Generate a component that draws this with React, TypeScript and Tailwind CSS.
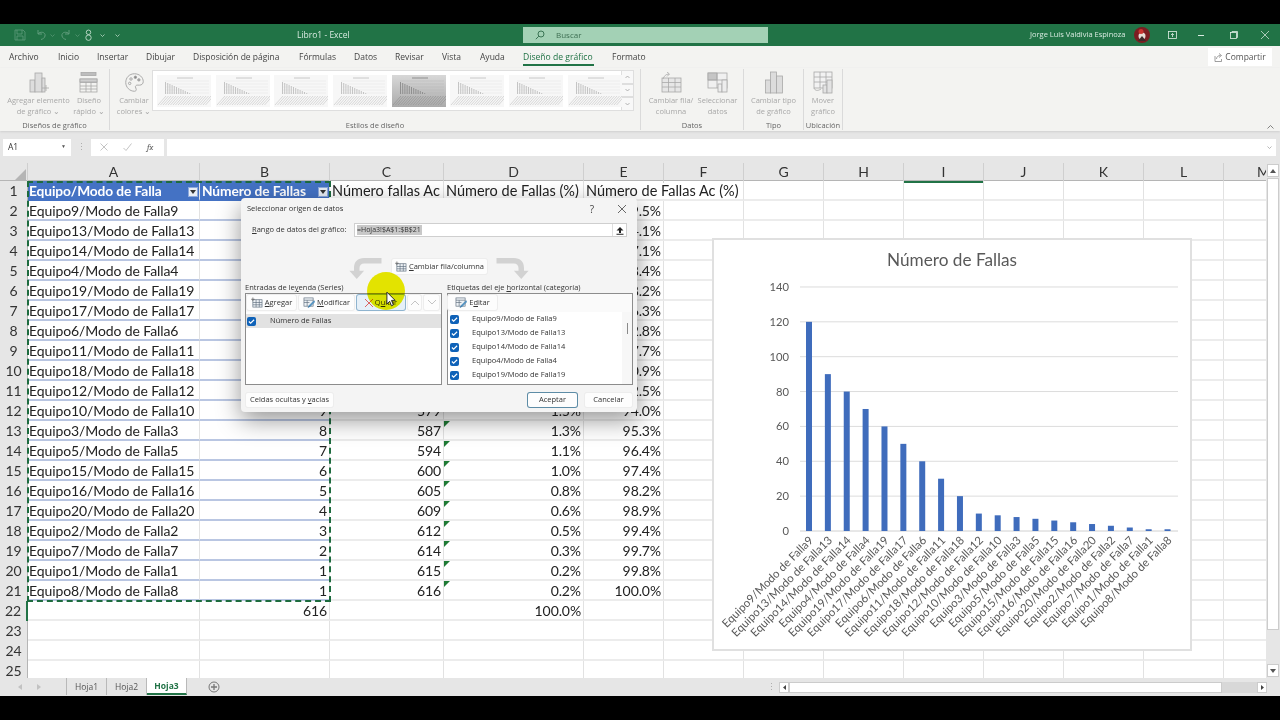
import React from "react";

const rows: [string, string, string, string, string][] = [
  ["Equipo9/Modo de Falla9", "120", "120", "19.5%", "19.5%"],
  ["Equipo13/Modo de Falla13", "90", "210", "14.6%", "34.1%"],
  ["Equipo14/Modo de Falla14", "80", "290", "13.0%", "47.1%"],
  ["Equipo4/Modo de Falla4", "70", "360", "11.4%", "58.4%"],
  ["Equipo19/Modo de Falla19", "60", "420", "9.7%", "68.2%"],
  ["Equipo17/Modo de Falla17", "50", "470", "8.1%", "76.3%"],
  ["Equipo6/Modo de Falla6", "40", "510", "6.5%", "82.8%"],
  ["Equipo11/Modo de Falla11", "30", "540", "4.9%", "87.7%"],
  ["Equipo18/Modo de Falla18", "20", "560", "3.2%", "90.9%"],
  ["Equipo12/Modo de Falla12", "10", "570", "1.6%", "92.5%"],
  ["Equipo10/Modo de Falla10", "9", "579", "1.5%", "94.0%"],
  ["Equipo3/Modo de Falla3", "8", "587", "1.3%", "95.3%"],
  ["Equipo5/Modo de Falla5", "7", "594", "1.1%", "96.4%"],
  ["Equipo15/Modo de Falla15", "6", "600", "1.0%", "97.4%"],
  ["Equipo16/Modo de Falla16", "5", "605", "0.8%", "98.2%"],
  ["Equipo20/Modo de Falla20", "4", "609", "0.6%", "98.9%"],
  ["Equipo2/Modo de Falla2", "3", "612", "0.5%", "99.4%"],
  ["Equipo7/Modo de Falla7", "2", "614", "0.3%", "99.7%"],
  ["Equipo1/Modo de Falla1", "1", "615", "0.2%", "99.8%"],
  ["Equipo8/Modo de Falla8", "1", "616", "0.2%", "100.0%"],
];
const values = [120, 90, 80, 70, 60, 50, 40, 30, 20, 10, 9, 8, 7, 6, 5, 4, 3, 2, 1, 1];

const colTemplate = "grid grid-cols-[28px_172px_130px_114px_140px_80px_80px_80px_80px_80px_80px_80px_80px_80px]";
const cols = ["A", "B", "C", "D", "E", "F", "G", "H", "I", "J", "K", "L", "M"];
const cell = "border-r border-b-2 border-r-[#e2e2e2] border-b-[#ececec] h-5 text-[14px] tracking-[-0.1px] leading-[19px] whitespace-nowrap text-[#222] px-0.5";

function Thumb({ dark }: { dark?: boolean }) {
  const line = dark ? "#b5b5b5" : "#e2e2e2";
  const bar = dark ? "#8f8f8f" : "#c4c4c4";
  const lab = dark ? "#9a9a9a" : "#d4d4d4";
  return (
    <div className={`w-[54px] h-[32px] flex-none ${dark ? "bg-gradient-to-b from-[#d8d8d8] to-[#ababab]" : "bg-[#f7f7f7]"}`}>
      <svg viewBox="0 0 54 32" className="w-[54px] h-[32px]">
        <line x1="20" y1="3" x2="36" y2="3" stroke={dark ? "#8f8f8f" : "#c8c8c8"} strokeWidth="1" />
        {[6, 9, 12, 15, 18].map((y) => <line key={y} x1="8" y1={y} x2="52" y2={y} stroke={line} strokeWidth="0.5" />)}
        {[0, 1, 2, 3, 4, 5, 6, 7, 8, 9, 10, 11].map((i) => <rect key={i} x={8 + i * 2.2} y={7 + i} width="1" height={12 - i} fill={bar} />)}
        {Array.from({ length: 20 }).map((_, i) => <line key={i} x1={1 + i * 2.500} y1="30" x2={9 + i * 2.500} y2="21" stroke={lab} strokeWidth="0.9" />)}
      </svg>
    </div>
  );
}

function RibbonBtn({ l1, l2, icon, w }: { l1: string; l2: string; icon: React.ReactNode; w: string }) {
  return (
    <div className={`flex flex-col items-center text-[#a8a8a8] leading-[11px] whitespace-nowrap shrink-0 ${w}`}>
      <div className="h-[21px] flex items-center justify-center">{icon}</div>
      <span className="mt-[2px]">{l1}</span>
      <span>{l2}</span>
    </div>
  );
}

const IconBars = () => (
  <svg width="22" height="21" viewBox="0 0 22 21" fill="#dddddd" stroke="#a8a8a8" strokeWidth="0.8"><rect x="2" y="8" width="5" height="12" /><rect x="7" y="1" width="7" height="19" /><rect x="14" y="6" width="3" height="14" /><path d="M14 16h7M18 13v6" fill="none" /></svg>
);
const IconQuick = () => (
  <svg width="20" height="21" viewBox="0 0 20 21" fill="none" stroke="#a8a8a8" strokeWidth="0.8"><rect x="2" y="0.500" width="15" height="3" fill="#bdbdbd" /><rect x="1" y="7" width="17" height="13" /><path d="M1 10.500h17M1 14h17M1 17h17M7 7v13M12 7v13" /><rect x="1" y="7" width="17" height="3" fill="#cfcfcf" /></svg>
);
const IconPalette = () => (
  <svg width="21" height="21" viewBox="0 0 24 24" fill="none" stroke="#a0a0a0" strokeWidth="1"><path d="M12 2C6 2 2 6.500 2 12s4.500 10 10 10c1.500 0 2-1 2-2 0-1.500-1-2-1-3s1-2 2-2h3c2 0 4-1.500 4-4C22 6 17.500 2 12 2z" /><circle cx="8" cy="8" r="1.400" /><circle cx="13" cy="6" r="1.400" fill="#888" /><circle cx="17" cy="9" r="1.400" fill="#aaa" /><circle cx="6.500" cy="13" r="1.400" /></svg>
);
const IconSwitch = () => (
  <svg width="22" height="21" viewBox="0 0 22 21" fill="none" stroke="#a8a8a8" strokeWidth="0.8"><rect x="2" y="6" width="19" height="14" fill="#e6e6e6" /><path d="M2 10.500h19M2 15h19M8.500 6v14M15 6v14" /><path d="M3 7c1-3 3-5 6-5M7 0l2.500 2L7 4.500" /></svg>
);
const IconSelect = () => (
  <svg width="22" height="21" viewBox="0 0 22 21" fill="none" stroke="#a8a8a8" strokeWidth="0.8"><rect x="1" y="1" width="19" height="15" fill="#f0f0f0" /><rect x="1" y="1" width="9" height="7" fill="#c5c5c5" /><path d="M1 8h19M10 1v15" /><rect x="11" y="12" width="4" height="8" fill="#ededed" /><rect x="15" y="8" width="5" height="12" fill="#ededed" /></svg>
);
const IconType = () => (
  <svg width="20" height="23" viewBox="0 0 20 23" fill="#dcdcdc" stroke="#a8a8a8" strokeWidth="0.8"><rect x="1.500" y="9" width="5" height="13" /><rect x="6.500" y="1" width="6" height="21" /><rect x="12.500" y="5" width="6" height="17" /></svg>
);
const IconMove = () => (
  <svg width="22" height="23" viewBox="0 0 22 23" fill="none" stroke="#a8a8a8" strokeWidth="0.8"><rect x="2" y="1" width="18" height="16" fill="#f2f2f2" /><path d="M2 6h18M2 11h18M8 1v16M14 1v16" /><rect x="11" y="14" width="4" height="8" fill="#e3e3e3" /><rect x="15" y="9" width="5" height="13" fill="#e3e3e3" /><path d="M2 17c1 3 4 3 7 1" /></svg>
);

function Check() {
  return (
    <span className="w-[9px] h-[9px] rounded-[2px] bg-[#0f62b8] flex items-center justify-center shrink-0">
      <svg width="7" height="7" viewBox="0 0 8 8" fill="none" stroke="#fff" strokeWidth="1.300"><path d="M1 4l2 2 4-4" /></svg>
    </span>
  );
}

const IconAdd = () => (
  <svg width="12" height="11" viewBox="0 0 13 12" fill="none" stroke="#5a6a7a" strokeWidth="0.7"><rect x="2" y="3" width="10" height="8" fill="#eef2f5" /><path d="M2 6h10M2 8.500h10M5.500 3v8M9 3v8" /><path d="M0 2.500h4M2 .5v4" stroke="#555" /></svg>
);
const IconEdit = () => (
  <svg width="12" height="11" viewBox="0 0 13 12" fill="none" stroke="#5a6a7a" strokeWidth="0.7"><rect x="1" y="1" width="10" height="9" fill="#eef2f5" /><path d="M1 3.500h10M1 6h6M4.500 3.500V10" /><path d="M12 4L7 9l-1.500 2.500L8 10l5-5z" fill="#5ba3d9" stroke="#35709c" /></svg>
);

function DlgBtn({ children, className }: { children: React.ReactNode; className?: string }) {
  return <div className={`bg-[#fdfdfd] rounded-[2px] shadow-[0_0_0_1px_#ededed] flex items-center justify-center gap-[2px] text-[7.5px] text-[#333] shrink-0 ${className ?? ""}`}>{children}</div>;
}

function Chart() {
  const ticks = [0, 20, 40, 60, 80, 100, 120, 140];
  const y0 = 292;
  const u = 1.743;
  return (
    <div className="absolute left-[712px] top-[238px] w-[480px] h-[413px] bg-white border-2 border-[#e0e0e0]">
      <svg width="476" height="409" viewBox="0 0 476 409" fontFamily="'Lato','Liberation Sans',sans-serif" className="-ml-px -mt-px overflow-visible">
        <text x="239" y="27" textAnchor="middle" fontSize="17.200" fill="#595959">Número de Fallas</text>
        {ticks.map((t) => (
          <g key={t}>
            {t > 0 && <line x1="87" x2="465" y1={y0 - t * u} y2={y0 - t * u} stroke="#dcdcdc" strokeWidth="1" />}
            <text x="76" y={y0 - t * u + 4} textAnchor="end" fontSize="11.200" fill="#595959">{t}</text>
          </g>
        ))}
        <line x1="87" x2="465" y1={y0} y2={y0} stroke="#d0d0d0" strokeWidth="1" />
        {values.map((v, i) => (
          <rect key={i} x={93 + i * 18.87} y={y0 - v * u} width="6" height={v * u} fill="#3f6cbc" />
        ))}
        {rows.map((r, i) => (
          <text key={r[0]} transform={`translate(${101 + i * 18.87} 302) rotate(-45)`} textAnchor="end" fontSize="11.400" fill="#595959">{r[0]}</text>
        ))}
      </svg>
    </div>
  );
}

function Dialog() {
  return (
    <div className="absolute left-[241px] top-[198px] w-[396px] h-[214px] bg-[#f4f4f4] rounded-[4px] shadow-[0_8px_24px_rgba(0,0,0,0.42)] text-[7.5px] text-[#333] flex flex-col pt-[5px] pl-[4px]" style={{ fontFamily: "'Open Sans','Liberation Sans',sans-serif" }}>
      <div className="flex items-center justify-between h-[12px] pl-[2px] pr-[11px]">
        <span>Seleccionar origen de datos</span>
        <div className="flex items-center gap-[24px] text-[#444]">
          <span className="text-[10px]">?</span>
          <svg width="8" height="8" viewBox="0 0 8 8" stroke="#444" strokeWidth="0.8"><path d="M0 0l8 8M8 0L0 8" /></svg>
        </div>
      </div>
      <div className="flex items-center mt-[8px] h-[14px]">
        <span className="w-[109px] pl-[7px] whitespace-nowrap shrink-0"><u>R</u>ango de datos del gráfico:</span>
        <div className="w-[273px] h-[14px] bg-white border border-[#cfcfcf] flex items-center justify-between pl-[2px] shrink-0">
          <span className="bg-[#c8c8c8] text-[#333] text-[7px] leading-[10px] w-[65px] whitespace-nowrap">=Hoja3!$A$1:$B$21</span>
          <span className="w-[14px] h-full border-l border-[#dedede] flex items-center justify-center">
            <svg width="8" height="9" viewBox="0 0 8 9" fill="#222"><path d="M4 1L7.500 4.500H5V7H3V4.500H.5zM.5 7.800h7v1h-7z" /></svg>
          </span>
        </div>
      </div>
      <div className="relative h-[15px] mt-[22px] shrink-0">
        <svg width="36" height="22" viewBox="0 0 36 24" className="absolute left-[102px] top-[-1px]" fill="#d2d2d2"><path d="M36 0v6H17c-3 0-5 2-5 5v3h5l-8 9-8-9h5v-3C6 4 10 0 17 0z" /></svg>
        <svg width="38" height="22" viewBox="0 0 36 24" className="absolute left-[249px] top-[-1px]" fill="#d2d2d2"><path d="M0 0v6h19c3 0 5 2 5 5v3h-5l8 9 8-9h-5v-3c0-7-4-11-11-11z" /></svg>
        <DlgBtn className="absolute left-[147px] top-0 w-[95px] h-[15px]"><IconAdd /><span><u>C</u>ambiar fila/columna</span></DlgBtn>
      </div>
      <div className="flex gap-[5px] mt-[8px]">
        <div className="w-[197px] shrink-0">
          <div className="h-[11px] leading-[11px] whitespace-nowrap">Entradas de le<u>y</u>enda (Series)</div>
          <div className="h-[92px] border border-[#8c8c8c] bg-white">
            <div className="h-[18px] flex gap-[3px] pl-[1px] pt-[1px] bg-[#fafafa]">
              <DlgBtn className="w-[49px] h-[15px]"><IconAdd /><span><u>A</u>gregar</span></DlgBtn>
              <DlgBtn className="w-[55px] h-[15px]"><IconEdit /><span><u>M</u>odificar</span></DlgBtn>
              <DlgBtn className="w-[48px] h-[15px] !bg-[#e6f0f8] !shadow-[0_0_0_1px_#8fb4cf]">
                <svg width="8" height="8" viewBox="0 0 8 8" stroke="#d9534f" strokeWidth="0.9"><path d="M0 0l8 8M8 0L0 8" /></svg>
                <span>Q<u>u</u>itar</span>
              </DlgBtn>
              <DlgBtn className="w-[13px] h-[15px]"><svg width="8" height="5" viewBox="0 0 8 5" fill="none" stroke="#c4c4c4"><path d="M0 5l4-4 4 4" /></svg></DlgBtn>
              <DlgBtn className="w-[15px] h-[15px]"><svg width="8" height="5" viewBox="0 0 8 5" fill="none" stroke="#c4c4c4"><path d="M0 0l4 4 4-4" /></svg></DlgBtn>
            </div>
            <div className="h-[14px] mt-[2px] bg-[#e2e2e2] flex items-center pl-[1px] gap-[14px]"><Check /><span>Número de Fallas</span></div>
          </div>
        </div>
        <div className="w-[186px] shrink-0">
          <div className="h-[11px] leading-[11px] whitespace-nowrap">Etiquetas del eje <u>h</u>orizontal (categoría)</div>
          <div className="h-[92px] border border-[#8c8c8c] bg-white">
            <div className="h-[18px] flex pt-[1px] bg-[#fafafa]">
              <DlgBtn className="w-[49px] h-[15px]"><IconEdit /><span>E<u>d</u>itar</span></DlgBtn>
            </div>
            <div className="flex h-[72px]">
              <div className="w-[174px] flex flex-col">
                {rows.slice(0, 5).map((r) => (
                  <div key={r[0]} className="h-[14px] flex items-center pl-[2px] gap-[13px] shrink-0"><Check /><span>{r[0]}</span></div>
                ))}
              </div>
              <div className="w-[10px] bg-[#f7f7f7] h-full flex justify-center pt-[11px]"><div className="w-px h-[11px] bg-[#8a8a8a]" /></div>
            </div>
          </div>
        </div>
      </div>
      <div className="flex justify-between mt-[8px] pl-[1px] pr-[5px]">
        <DlgBtn className="w-[87px] h-[14px]"><span>Celdas ocultas y <u>v</u>acías</span></DlgBtn>
        <div className="flex gap-[8px]">
          <DlgBtn className="w-[49px] h-[14px] !shadow-[0_0_0_1px_#5d8ca6]">Aceptar</DlgBtn>
          <DlgBtn className="w-[47px] h-[14px]">Cancelar</DlgBtn>
        </div>
      </div>
    </div>
  );
}

const Caret = ({ c }: { c: string }) => (
  <svg width="5" height="3" viewBox="0 0 5 3" fill="none" stroke={c} strokeWidth="0.7"><path d="M.5 .5l2 2 2-2" /></svg>
);

const FilterBtn = () => (
  <span className="absolute right-[1px] top-[6px] w-[10px] h-[10px] bg-[#e8edf5] border border-[#8ea9db] flex items-center justify-center">
    <span className="block w-0 h-0 border-x-[3px] border-x-transparent border-t-[4px] border-t-[#333]" />
  </span>
);

export default function App() {
  return (
    <div className="w-[1280px] h-[720px] bg-black overflow-hidden flex flex-col relative" style={{ fontFamily: "'Open Sans','Liberation Sans',sans-serif" }}>
      <div className="h-[24px] bg-black shrink-0" />
      {/* title bar */}
      <div className="h-[22px] bg-[#217346] shrink-0 flex items-center relative text-white text-[8px]">
        <div className="flex items-center pl-[14px]">
          <svg width="12" height="12" viewBox="0 0 12 12" fill="none" stroke="#5f9c7b" strokeWidth="0.8"><path d="M1 1h8l2 2v8H1zM3 1v4h5V1M3 11V7h6v4" /></svg>
          <svg width="12" height="12" viewBox="0 0 12 12" fill="none" stroke="#5f9c7b" strokeWidth="1" className="ml-[9px]"><path d="M3 1v4h4M3 5c2-3 8-2 7 2-.5 2-2 3-4 3.500" /></svg>
          <span className="ml-[3px]"><Caret c="#5f9c7b" /></span>
          <svg width="12" height="12" viewBox="0 0 12 12" fill="none" stroke="#5f9c7b" strokeWidth="1" className="ml-[5px]"><path d="M9 1v4H5M9 5C7 2 1 3 2 7c.5 2 2 3 4 3.500" /></svg>
          <span className="ml-[3px]"><Caret c="#5f9c7b" /></span>
          <svg width="9" height="14" viewBox="0 0 10 14" fill="none" stroke="#cfe6d8" strokeWidth="0.9" className="ml-[4px]"><circle cx="5" cy="4" r="2.500" /><circle cx="5" cy="10" r="3" /></svg>
          <span className="ml-[7px]"><Caret c="#cfe6d8" /></span>
          <span className="ml-[10px]"><Caret c="#cfe6d8" /></span>
        </div>
        <span className="absolute left-[297px] text-[8.5px] text-[#d9ebe1]">Libro1  -  Excel</span>
        <div className="absolute left-[523px] top-[3px] w-[245px] h-[16px] bg-[#a3d1b5] flex items-center gap-[11px] pl-[12px] text-[8px] text-[#3d6e52]">
          <svg width="10" height="10" viewBox="0 0 10 10" fill="none" stroke="#2f6a49" strokeWidth="0.9"><circle cx="6" cy="4" r="3" /><path d="M3.800 6.200L.8 9.200" /></svg>
          <span>Buscar</span>
        </div>
        <span className="absolute left-[1030px] text-[7.5px] text-[#d9ebe1]">Jorge Luis Valdivia Espinoza</span>
        <svg width="16" height="16" viewBox="0 0 16 16" className="absolute left-[1134px] top-[3px]"><circle cx="8" cy="8" r="8" fill="#7b1e22" /><circle cx="8" cy="9" r="3.500" fill="#e6dcd5" /><circle cx="7" cy="4.500" r="2.500" fill="#c9342f" /><path d="M4 14l4-5 4 5z" fill="#3b2a2a" /></svg>
        <svg width="9" height="8" viewBox="0 0 9 8" fill="none" stroke="#e1efe7" strokeWidth="0.8" className="absolute left-[1168px] top-[7px]"><rect x=".5" y=".5" width="8" height="7" /><path d="M4.500 6V2.500M3 4l1.500-1.500L6 4" /></svg>
        <div className="absolute left-[1198px] top-[11px] w-[6px] h-px bg-[#d9ebe1]" />
        <svg width="8" height="8" viewBox="0 0 8 8" fill="none" stroke="#e1efe7" strokeWidth="0.8" className="absolute left-[1230px] top-[7px]"><rect x=".5" y="1.500" width="6" height="6" /><path d="M2 1.500V.5h5.500v6h-1" /></svg>
        <svg width="8" height="8" viewBox="0 0 8 8" stroke="#e1efe7" strokeWidth="0.7" className="absolute left-[1261px] top-[7px]"><path d="M0 0l8 8M8 0L0 8" /></svg>
      </div>
      {/* tabs */}
      <div className="h-[22px] bg-[#f3f3f1] shrink-0 flex items-center relative text-[8.5px] text-[#444]">
        {[["Archivo", 9], ["Inicio", 58], ["Insertar", 97], ["Dibujar", 146], ["Disposición de página", 193], ["Fórmulas", 299], ["Datos", 354], ["Revisar", 395], ["Vista", 442], ["Ayuda", 480], ["Formato", 612]].map(([t, x]) => (
          <span key={t as string} className="absolute" style={{ left: x as number }}>{t}</span>
        ))}
        <span className="absolute left-[523px] text-[#217346] font-medium text-[8.6px]">Diseño de gráfico</span>
        <div className="absolute left-[523px] top-[18px] w-[71px] h-[2px] bg-[#217346]" />
        <div className="absolute left-[1208px] top-[2px] w-[64px] h-[18px] bg-white flex items-center justify-center gap-[2px] text-[#555]">
          <svg width="9" height="9" viewBox="0 0 9 9" fill="none" stroke="#777" strokeWidth="0.7"><path d="M1 3v5.500h6.500V6M2.500 6c0-2 1.500-3.500 4-3.500M5 .5l2.500 2L5 4.500" /></svg>
          Compartir
        </div>
      </div>
      {/* ribbon */}
      <div className="h-[63px] bg-[#f3f3f1] shrink-0 flex text-[7.5px] shadow-[0_1px_2px_#cfcfcf] relative">
        <div className="w-[110px] flex flex-col border-r border-[#dadada] my-[1px] shrink-0">
          <div className="flex h-[47px] pt-[3px]">
            <RibbonBtn w="w-[77px]" l1="Agregar elemento" l2="de gráfico ⌄" icon={<IconBars />} />
            <RibbonBtn w="w-[24px]" l1="Diseño" l2="rápido ⌄" icon={<IconQuick />} />
          </div>
          <span className="text-center text-[#666] mt-[4px] leading-[11px]">Diseños de gráfico</span>
        </div>
        <div className="w-[531px] flex flex-col border-r border-[#dadada] my-[1px] shrink-0">
          <div className="flex h-[47px] pt-[3px]">
            <div className="ml-[6px]"><RibbonBtn w="w-[36px]" l1="Cambiar" l2="colores ⌄" icon={<IconPalette />} /></div>
            <div className="w-[482px] h-[41px] -mt-[2px] flex shrink-0">
              <div className="w-[470px] bg-white border border-[#dedede] flex items-center gap-[4.7px] pl-[4px] shrink-0">
                {[0, 1, 2, 3, 4, 5, 6, 7].map((i) => <Thumb key={i} dark={i === 4} />)}
              </div>
              <div className="w-[12px] flex flex-col text-[#888]">
                {[0, 1, 2].map((i) => (
                  <div key={i} className="h-[13.66px] bg-[#f8f8f8] border border-[#dedede] border-l-0 flex items-center justify-center"><svg width="5" height="4" viewBox="0 0 5 4" fill="none" stroke="#999" strokeWidth="0.7"><path d={i === 0 ? "M.5 3l2-2 2 2" : "M.5 1l2 2 2-2"} /></svg></div>
                ))}
              </div>
            </div>
          </div>
          <span className="text-center text-[#666] mt-[4px] leading-[11px]">Estilos de diseño</span>
        </div>
        <div className="w-[103px] flex flex-col border-r border-[#dadada] my-[1px] shrink-0">
          <div className="flex h-[47px] pt-[3px]">
            <RibbonBtn w="w-[60px]" l1="Cambiar fila/" l2="columna" icon={<IconSwitch />} />
            <RibbonBtn w="w-[33px]" l1="Seleccionar" l2="datos" icon={<IconSelect />} />
          </div>
          <span className="text-center text-[#666] mt-[4px] leading-[11px]">Datos</span>
        </div>
        <div className="w-[60px] flex flex-col border-r border-[#dadada] my-[1px] shrink-0">
          <div className="flex justify-center h-[47px] pt-[3px]"><RibbonBtn w="w-full" l1="Cambiar tipo" l2="de gráfico" icon={<IconType />} /></div>
          <span className="text-center text-[#666] mt-[4px] leading-[11px]">Tipo</span>
        </div>
        <div className="w-[39px] flex flex-col border-r border-[#dadada] my-[1px] shrink-0">
          <div className="flex justify-center h-[47px] pt-[3px]"><RibbonBtn w="w-full" l1="Mover" l2="gráfico" icon={<IconMove />} /></div>
          <span className="text-center text-[#666] mt-[4px] leading-[11px]">Ubicación</span>
        </div>
        <svg width="7" height="4" viewBox="0 0 7 4" fill="none" stroke="#666" strokeWidth="0.8" className="absolute left-[1267px] top-[57px]"><path d="M.5 3.500l3-3 3 3" /></svg>
      </div>
      {/* formula bar */}
      <div className="h-[32px] bg-[#e6e6e6] shrink-0 flex items-center pl-[3px] pr-[4px] text-[8.5px] text-[#333]">
        <div className="w-[68px] h-[17px] bg-white flex items-center justify-between pl-[5px] pr-[5px] shrink-0"><span>A1</span><span className="text-[5px] text-[#555]">▼</span></div>
        <span className="w-[20px] text-center text-[#aaa] shrink-0">⋮</span>
        <div className="w-[73px] h-[17px] bg-white flex items-center gap-[15px] pl-[9px] shrink-0">
          <svg width="8" height="8" viewBox="0 0 8 8" stroke="#b5b5b5" strokeWidth="0.8"><path d="M.5 .5l7 7M7.500 .5l-7 7" /></svg>
          <svg width="9" height="8" viewBox="0 0 9 8" fill="none" stroke="#b5b5b5" strokeWidth="0.8"><path d="M.5 5l2.500 2.500L8.500 .5" /></svg>
          <span className="italic text-[#555] font-serif">fx</span>
        </div>
        <div className="flex-1 h-[17px] ml-[3px] bg-white flex items-center justify-end pr-[4px]"><Caret c="#999" /></div>
      </div>
      {/* sheet */}
      <div className="flex-1 min-h-0 flex relative bg-white overflow-hidden">
        <div className="w-[1266px] overflow-hidden" style={{ fontFamily: "'Lato','Liberation Sans',sans-serif" }}>
          <div className={`${colTemplate} h-[18px] bg-[#e6e6e6] border-b border-[#b5b5b5] text-[14px] text-[#333]`}>
            <div className="border-r border-[#cfcfcf] flex items-end justify-end"><div className="w-0 h-0 border-l-[13px] border-l-transparent border-b-[13px] border-b-[#b5b5b5] mb-[1px] mr-[1px]" /></div>
            {cols.map((c) => (
              <div key={c} className={`border-r border-[#cfcfcf] text-center leading-[18px] ${c === "I" ? "border-b-2 border-b-[#217346]" : ""}`}>{c}</div>
            ))}
          </div>
          <div className={colTemplate}>
            <div className="bg-[#e6e6e6] h-5 text-center text-[14px] leading-5 text-[#333] border-r border-[#b5b5b5]">1</div>
            <div className={`${cell} !pl-px !text-[13.75px] !border-b-[#4472c4] bg-[#4472c4] !text-white font-bold relative`}>Equipo/Modo de Falla<FilterBtn /></div>
            <div className={`${cell} !text-[13.75px] !border-b-[#4472c4] bg-[#4472c4] !text-white font-bold relative`}>Número de Fallas<FilterBtn /></div>
            <div className={`${cell} !text-[14.5px] !tracking-normal`}>Número fallas Ac</div>
            <div className={`${cell} !text-[14.5px] !tracking-normal`}>Número de Fallas (%)</div>
            <div className={`${cell} !text-[14.5px] !tracking-normal !border-r-0`}>Número de Fallas Ac (%)</div>
            {cols.slice(5).map((c) => <div key={c} className={cell} />)}
          </div>
          {Array.from({ length: 24 }).map((_, i) => {
            const n = i + 2;
            const r = rows[i];
            const covered = i < 10;
            return (
              <div key={n} className={colTemplate}>
                <div className={`bg-[#e6e6e6] h-5 text-center text-[14px] leading-5 text-[#333] border-r border-[#b5b5b5] ${n === 22 ? "border-r-2 border-r-[#217346]" : ""}`}>{n}</div>
                <div className={`${cell} !pl-px ${r ? "!border-b-[#b9c6e2]" : ""}`}>{r ? r[0] : ""}</div>
                <div className={`${cell} text-right ${r ? "!border-b-[#b9c6e2]" : ""}`}>{r && !covered ? r[1] : n === 22 ? "616" : ""}</div>
                <div className={`${cell} text-right relative`}>
                  {r && !covered ? r[2] : ""}
                  {r && !covered && <span className="absolute right-[-1px] top-0 translate-x-full w-0 h-0 border-t-[6px] border-t-[#1e7a34] border-r-[6px] border-r-transparent" />}
                </div>
                <div className={`${cell} text-right`}>{r && !covered ? r[3] : n === 22 ? "100.0%" : ""}</div>
                <div className={`${cell} text-right`}>{r ? r[4] : ""}</div>
                {cols.slice(5).map((c) => <div key={c} className={cell} />)}
              </div>
            );
          })}
        </div>
        <div className="w-[14px] bg-[#e6e6e6] flex flex-col items-center text-[#555]">
          <div className="w-[12px] h-[13px] bg-white border border-[#ccc] flex items-center justify-center mt-[1px] shrink-0"><svg width="6" height="4" viewBox="0 0 6 4" fill="#555"><path d="M3 0l3 4H0z" /></svg></div>
          <div className="w-[12px] flex-1 bg-white border border-[#ccc] mb-[34px] mt-px" />
          <div className="w-[12px] h-[13px] bg-white border border-[#ccc] flex items-center justify-center mb-[1px] shrink-0"><svg width="6" height="4" viewBox="0 0 6 4" fill="#555"><path d="M3 4l3-4H0z" /></svg></div>
        </div>
        {/* dashed selection */}
        <div className="absolute left-[27px] top-[18px] w-[304px] h-[421px] border-2 border-dashed border-[#1d6b3e] pointer-events-none" />
      </div>
      {/* sheet tabs */}
      <div className="h-[18px] bg-[#e6e6e6] shrink-0 flex items-center relative text-[8.5px] text-[#555]">
        <svg width="4" height="6" viewBox="0 0 4 6" fill="#c2c2c2" className="absolute left-[18px] top-[6px]"><path d="M4 0v6L0 3z" /></svg>
        <svg width="4" height="6" viewBox="0 0 4 6" fill="#c2c2c2" className="absolute left-[37px] top-[6px]"><path d="M0 0v6l4-3z" /></svg>
        <div className="absolute left-[66px] top-0 w-[41px] h-[17px] border-l border-r border-[#b9b9b9] text-center leading-[17px]">Hoja1</div>
        <div className="absolute left-[107px] top-0 w-[40px] h-[17px] border-r border-[#b9b9b9] text-center leading-[17px]">Hoja2</div>
        <div className="absolute left-[147px] top-0 w-[40px] h-[17px] bg-white border-r border-[#b9b9b9] border-b-2 border-b-[#217346] text-center leading-[16px] font-bold text-[#217346]">Hoja3</div>
        <svg width="12" height="12" viewBox="0 0 12 12" className="absolute left-[208px] top-[3px]" fill="none" stroke="#777"><circle cx="6" cy="6" r="5" /><path d="M6 3v6M3 6h6" strokeWidth="1.300" /></svg>
        <span className="absolute left-[767px] text-[#aaa]">⋮</span>
        <div className="absolute left-[779px] top-[4px] w-[10px] h-[11px] bg-white border border-[#ccc] flex items-center justify-center"><svg width="3" height="5" viewBox="0 0 3 5" fill="#444"><path d="M3 0v5L0 2.500z" /></svg></div>
        <div className="absolute left-[789px] top-[4px] w-[433px] h-[11px] bg-white border border-[#ccc]" />
        <div className="absolute left-[1222px] top-[4px] w-[35px] h-[11px] bg-[#d8d8d8]" />
        <div className="absolute left-[1257px] top-[4px] w-[10px] h-[11px] bg-white border border-[#ccc] flex items-center justify-center"><svg width="3" height="5" viewBox="0 0 3 5" fill="#444"><path d="M0 0v5l3-2.500z" /></svg></div>
      </div>
      <div className="h-[24px] bg-black shrink-0" />
      <Chart />
      <Dialog />
      {/* pointer highlight */}
      <div className="absolute left-[367px] top-[272px] w-[38px] h-[38px] rounded-full bg-[#eeee00] mix-blend-multiply blur-[0.5px] pointer-events-none" />
      <svg width="11" height="16" viewBox="0 0 12 17" className="absolute left-[386px] top-[291px]"><path d="M1 1v13l3-3 2 5 2-1-2-5h4z" fill="#fff" stroke="#222" strokeWidth="1" /></svg>
    </div>
  );
}
